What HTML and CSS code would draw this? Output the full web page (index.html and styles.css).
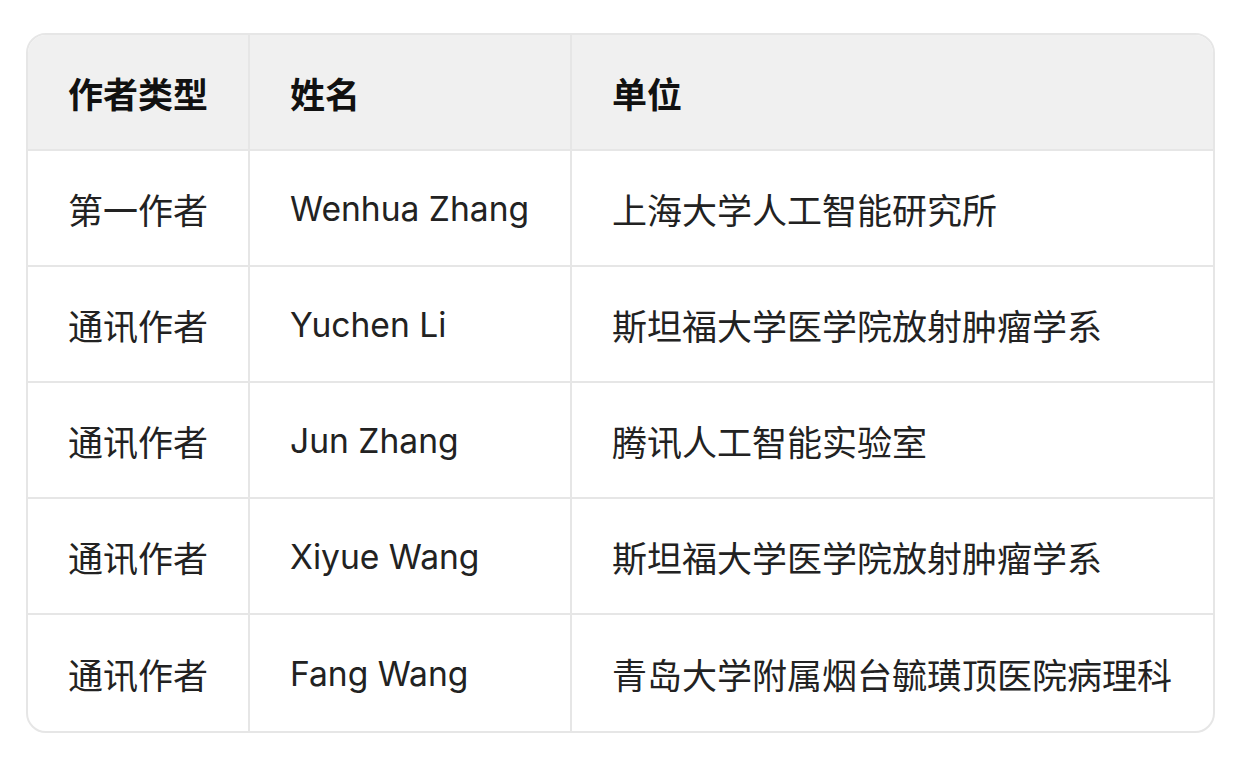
FILE: index.html
```html
<!DOCTYPE html>
<html lang="zh">
<head>
<meta charset="utf-8">
<link rel="stylesheet" href="styles.css">
</head>
<body>
<div class="page">
  <table class="authors">
    <colgroup>
      <col class="c1">
      <col class="c2">
      <col class="c3">
    </colgroup>
    <thead>
      <tr><th>作者类型</th><th>姓名</th><th>单位</th></tr>
    </thead>
    <tbody>
      <tr><td>第一作者</td><td class="name">Wenhua Zhang</td><td>上海大学人工智能研究所</td></tr>
      <tr><td>通讯作者</td><td class="name">Yuchen Li</td><td>斯坦福大学医学院放射肿瘤学系</td></tr>
      <tr><td>通讯作者</td><td class="name">Jun Zhang</td><td>腾讯人工智能实验室</td></tr>
      <tr><td>通讯作者</td><td class="name">Xiyue Wang</td><td>斯坦福大学医学院放射肿瘤学系</td></tr>
      <tr><td>通讯作者</td><td class="name">Fang Wang</td><td>青岛大学附属烟台毓璜顶医院病理科</td></tr>
    </tbody>
  </table>
</div>
</body>
</html>
```

FILE: styles.css
```css
html, body {
  margin: 0;
  padding: 0;
  background: #ffffff;
}

.page {
  padding: 33px 26px;
}

.authors {
  width: 1189px;
  table-layout: fixed;
  border-collapse: separate;
  border-spacing: 0;
  border: 2px solid #e6e6e6;
  border-radius: 20px;
  overflow: hidden;
  font-family: "Inter", "Noto Sans CJK SC", sans-serif;
  font-size: 35px;
  color: #222222;
}

.c1 { width: 222px; }
.c2 { width: 322px; }

.authors th,
.authors td {
  height: 114px;
  padding: 0 0 0 40px;
  text-align: left;
  vertical-align: middle;
  border-right: 2px solid #e6e6e6;
  border-bottom: 2px solid #e6e6e6;
  white-space: nowrap;
}

.authors th:last-child,
.authors td:last-child {
  border-right: none;
}

.authors tbody tr:last-child td {
  border-bottom: none;
  height: 116px;
}

.authors td.name {
  font-size: 33.6px;
}

.authors th {
  background: #f0f0f0;
  font-weight: 700;
  color: #111111;
}
```
